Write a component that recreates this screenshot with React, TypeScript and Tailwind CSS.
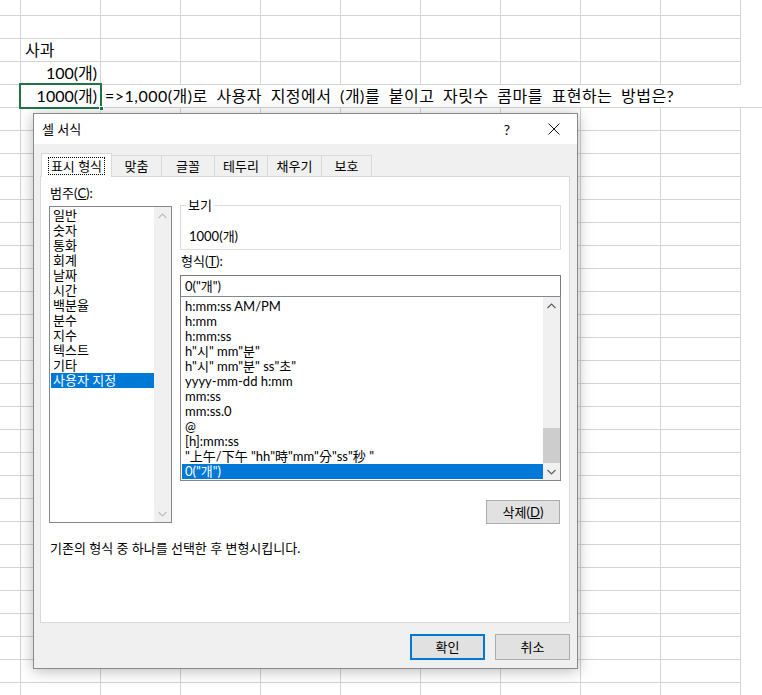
import React from "react";

const CATEGORIES = ["일반", "숫자", "통화", "회계", "날짜", "시간", "백분율", "분수", "지수", "텍스트", "기타", "사용자 지정"];

const FORMATS = [
  "h:mm:ss AM/PM",
  "h:mm",
  "h:mm:ss",
  'h"시" mm"분"',
  'h"시" mm"분" ss"초"',
  "yyyy-mm-dd h:mm",
  "mm:ss",
  "mm:ss.0",
  "@",
  "[h]:mm:ss",
  '"上午/下午 "hh"時"mm"分"ss"秒 "',
  '0("개")',
];

const TABS = [
  { label: "표시 형식", width: "w-[71px]" },
  { label: "맞춤", width: "w-[51px]" },
  { label: "글꼴", width: "w-[54px]" },
  { label: "테두리", width: "w-[54px]" },
  { label: "채우기", width: "w-[55px]" },
  { label: "보호", width: "w-[51px]" },
];

const ROWS = 31;
const COLS = 9;

export default function App() {
  return (
    <div className="relative h-[695px] w-[762px] overflow-hidden bg-white font-['Lato','Noto_Sans_CJK_KR',sans-serif] text-black">
      <Sheet />
      <FormatDialog />
    </div>
  );
}

function Sheet() {
  return (
    <div className="flex flex-col text-[16px] [word-spacing:2px]">
      {Array.from({ length: ROWS }).map((_, row) => {
        const height = row === 0 ? "h-[16px]" : "h-[23px]";
        if (row === 4) {
          return (
            <div key={row} className={`flex ${height}`}>
              <div className="w-[21px] flex-none border-r border-b border-[#d4d4d4]" />
              <div className="relative flex w-[80px] flex-none items-center justify-end border-r border-b border-[#d4d4d4] pr-[3px]">
                1000(개)
                <span className="absolute -top-[2px] -left-[2px] h-[26px] w-[83px] border-2 border-[#217346]" />
                <span className="absolute top-[21px] left-[78px] h-[5px] w-[5px] border border-white bg-[#217346]" />
              </div>
              <div className="flex w-[640px] flex-none items-center border-b border-[#d4d4d4] pl-[4px] tracking-[0.5px] whitespace-nowrap [word-spacing:4px]">
                =&gt;1,000(개)로 사용자 지정에서 (개)를 붙이고 자릿수 콤마를 표현하는 방법은?
              </div>
              <div className="w-[80px] flex-none border-r border-b border-[#d4d4d4]" />
            </div>
          );
        }
        return (
          <div key={row} className={`flex ${height}`}>
            <div className="w-[21px] flex-none border-r border-b border-[#d4d4d4]" />
            {Array.from({ length: COLS }).map((_, col) => (
              <div
                key={col}
                className={`flex w-[80px] flex-none items-center border-r border-b border-[#d4d4d4] whitespace-nowrap ${
                  col === 0 && row === 3 ? "justify-end pr-[3px]" : "pl-[4px]"
                }`}
              >
                {col === 0 && row === 2 ? "사과" : col === 0 && row === 3 ? "100(개)" : ""}
              </div>
            ))}
          </div>
        );
      })}
    </div>
  );
}

function FormatDialog() {
  return (
    <div className="absolute top-[113px] left-[33px] flex h-[556px] w-[545px] flex-col border border-[#8a8a8a] bg-[#f0f0f0] text-[13px] leading-[15px] shadow-[0_2px_14px_rgba(0,0,0,0.28)]">
      <div className="flex h-[30px] flex-none items-center bg-white pl-[8px]">
        <span className="flex-1">셀 서식</span>
        <span className="w-[20px] text-center text-[14px]">?</span>
        <span className="ml-[30px] mr-[16px] flex h-[14px] w-[14px] items-center justify-center">
          <svg width="12" height="12" viewBox="0 0 12 12">
            <path d="M0.5 0.5 L11.5 11.5 M11.5 0.5 L0.5 11.5" stroke="#111" strokeWidth="1" />
          </svg>
        </span>
      </div>

      <div className="flex flex-1 flex-col pt-[9px] pr-[7px] pl-[6px]">
        <div className="flex h-[23px] items-start pl-[1px]">
          {TABS.map((tab, i) =>
            i === 0 ? (
              <div
                key={tab.label}
                className={`relative z-10 -mr-px flex h-[24px] ${tab.width} flex-none items-center justify-center border-x border-t border-[#d9d9d9] bg-white`}
              >
                <span className="border border-dotted border-black px-[2px] leading-[16px]">{tab.label}</span>
              </div>
            ) : (
              <div
                key={tab.label}
                className={`-mr-px mt-[2px] flex h-[21px] ${tab.width} flex-none items-center justify-center border-x border-t border-[#d9d9d9]`}
              >
                {tab.label}
              </div>
            )
          )}
        </div>

        <div className="flex h-[447px] flex-none flex-col border border-[#d9d9d9] bg-white">
          <div className="flex flex-1 gap-[8px] pt-[9px] pl-[8px]">
            <div className="flex w-[123px] flex-none flex-col">
              <div className="pl-[1px]">
                범주(<span className="underline">C</span>):
              </div>
              <div className="mt-[5px] flex h-[317px] border border-[#828790]">
                <div className="flex-1 pt-[1px] pl-[1px]">
                  {CATEGORIES.map((c) => (
                    <div
                      key={c}
                      className={`h-[15px] pl-[2px] ${c === "사용자 지정" ? "bg-[#0078d7] text-white" : ""}`}
                    >
                      {c}
                    </div>
                  ))}
                </div>
                <div className="flex w-[17px] flex-col justify-between bg-[#f0f0f0] py-[3px]">
                  <Chevron up color="#bfbfbf" />
                  <Chevron color="#bfbfbf" />
                </div>
              </div>
            </div>

            <div className="flex w-[381px] flex-none flex-col">
              <div className="relative mt-[19px] h-[45px] border border-[#dcdcdc] pt-[23px] pl-[8px]">
                <span className="absolute -top-[8px] left-[5px] bg-white px-[2px]">보기</span>
                1000(개)
              </div>
              <div className="mt-[4px] pl-[1px]">
                형식(<span className="underline">T</span>):
              </div>
              <div className="mt-[6px] flex h-[22px] items-center border border-[#7a7a7a] pl-[4px]">0("개")</div>
              <div className="-mt-px flex h-[185px] border border-[#828790]">
                <div className="flex-1 pt-[2px] pl-[1px]">
                  {FORMATS.map((f, i) => (
                    <div
                      key={i}
                      className={`h-[15px] pl-[3px] whitespace-pre ${i === FORMATS.length - 1 ? "bg-[#0078d7] text-white" : ""}`}
                    >
                      {f}
                    </div>
                  ))}
                </div>
                <div className="flex w-[17px] flex-col bg-[#f0f0f0]">
                  <div className="flex h-[17px] items-center justify-center">
                    <Chevron up color="#606060" />
                  </div>
                  <div className="flex-1" />
                  <div className="h-[35px] bg-[#cdcdcd]" />
                  <div className="flex h-[17px] items-center justify-center">
                    <Chevron color="#606060" />
                  </div>
                </div>
              </div>
              <div className="mt-[19px] flex justify-end pr-[1px]">
                <button className="flex h-[24px] w-[74px] items-center justify-center border border-[#adadad] bg-[#e1e1e1]">
                  삭제(<span className="underline">D</span>)
                </button>
              </div>
            </div>
          </div>
          <div className="pb-[66px] pl-[9px]">기존의 형식 중 하나를 선택한 후 변형시킵니다.</div>
        </div>

        <div className="mt-[11px] flex justify-end gap-[10px]">
          <button className="flex h-[26px] w-[75px] items-center justify-center border-2 border-[#0078d7] bg-[#e1e1e1]">
            확인
          </button>
          <button className="flex h-[26px] w-[75px] items-center justify-center border border-[#adadad] bg-[#e1e1e1]">
            취소
          </button>
        </div>
      </div>
    </div>
  );
}

function Chevron({ up = false, color }: { up?: boolean; color: string }) {
  return (
    <div className="flex h-[11px] items-center justify-center">
      <svg width="9" height="6" viewBox="0 0 9 6">
        <path
          d={up ? "M0.5 5 L4.5 1 L8.5 5" : "M0.5 1 L4.5 5 L8.5 1"}
          fill="none"
          stroke={color}
          strokeWidth="1.2"
        />
      </svg>
    </div>
  );
}
